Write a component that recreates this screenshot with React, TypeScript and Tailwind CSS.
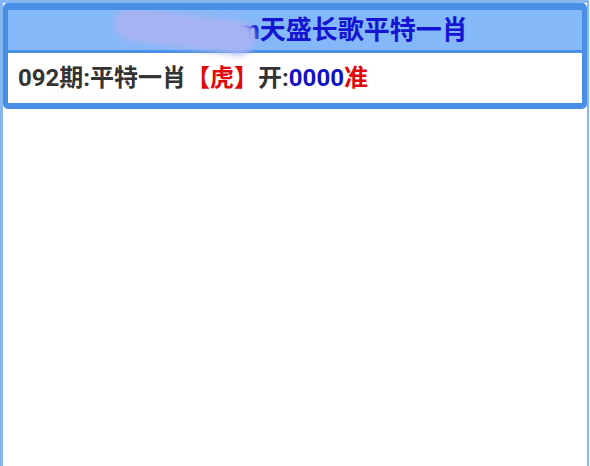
export default function App() {
  return (
    <div className="w-[590px] h-[466px] bg-white overflow-hidden" style={{ fontFamily: 'Roboto, "Noto Sans CJK SC", sans-serif' }}>
      <div className="h-full border-l-[3px] border-r-[2px] border-t-[3px] border-[#86b6f2] mr-[1px]">
        <div className="rounded-[5px] border-x-[5px] border-t-[7px] border-b-[6px] border-[#4a8fe6] overflow-hidden">
          {/* title */}
          <div className="relative h-[40px] bg-[#85b8f8] flex items-center justify-center">
            <div className="flex items-center font-bold text-[26px] leading-none text-[#1414d2]">
              <span className="inline-block w-[115px] text-transparent select-none">www</span>
              <span>m天盛长歌平特一肖</span>
            </div>
            <div className="absolute left-[106px] top-[4px] w-[142px] h-[34px] rounded-full bg-[#a6b3f3] blur-[3px] rotate-[7deg]" />
          </div>
          <div className="h-[3px] bg-[#4a8fe6]" />
          {/* row */}
          <div className="h-[50px] bg-white flex items-center pl-[10px] font-bold text-[24px] text-[#333333]">
            <span>092期:平特一肖</span>
            <span className="text-[#e00a0a]">【虎】</span>
            <span>开:</span>
            <span className="text-[#1212c4]">0000</span>
            <span className="text-[#e00a0a]">准</span>
          </div>
        </div>
      </div>
    </div>
  );
}
